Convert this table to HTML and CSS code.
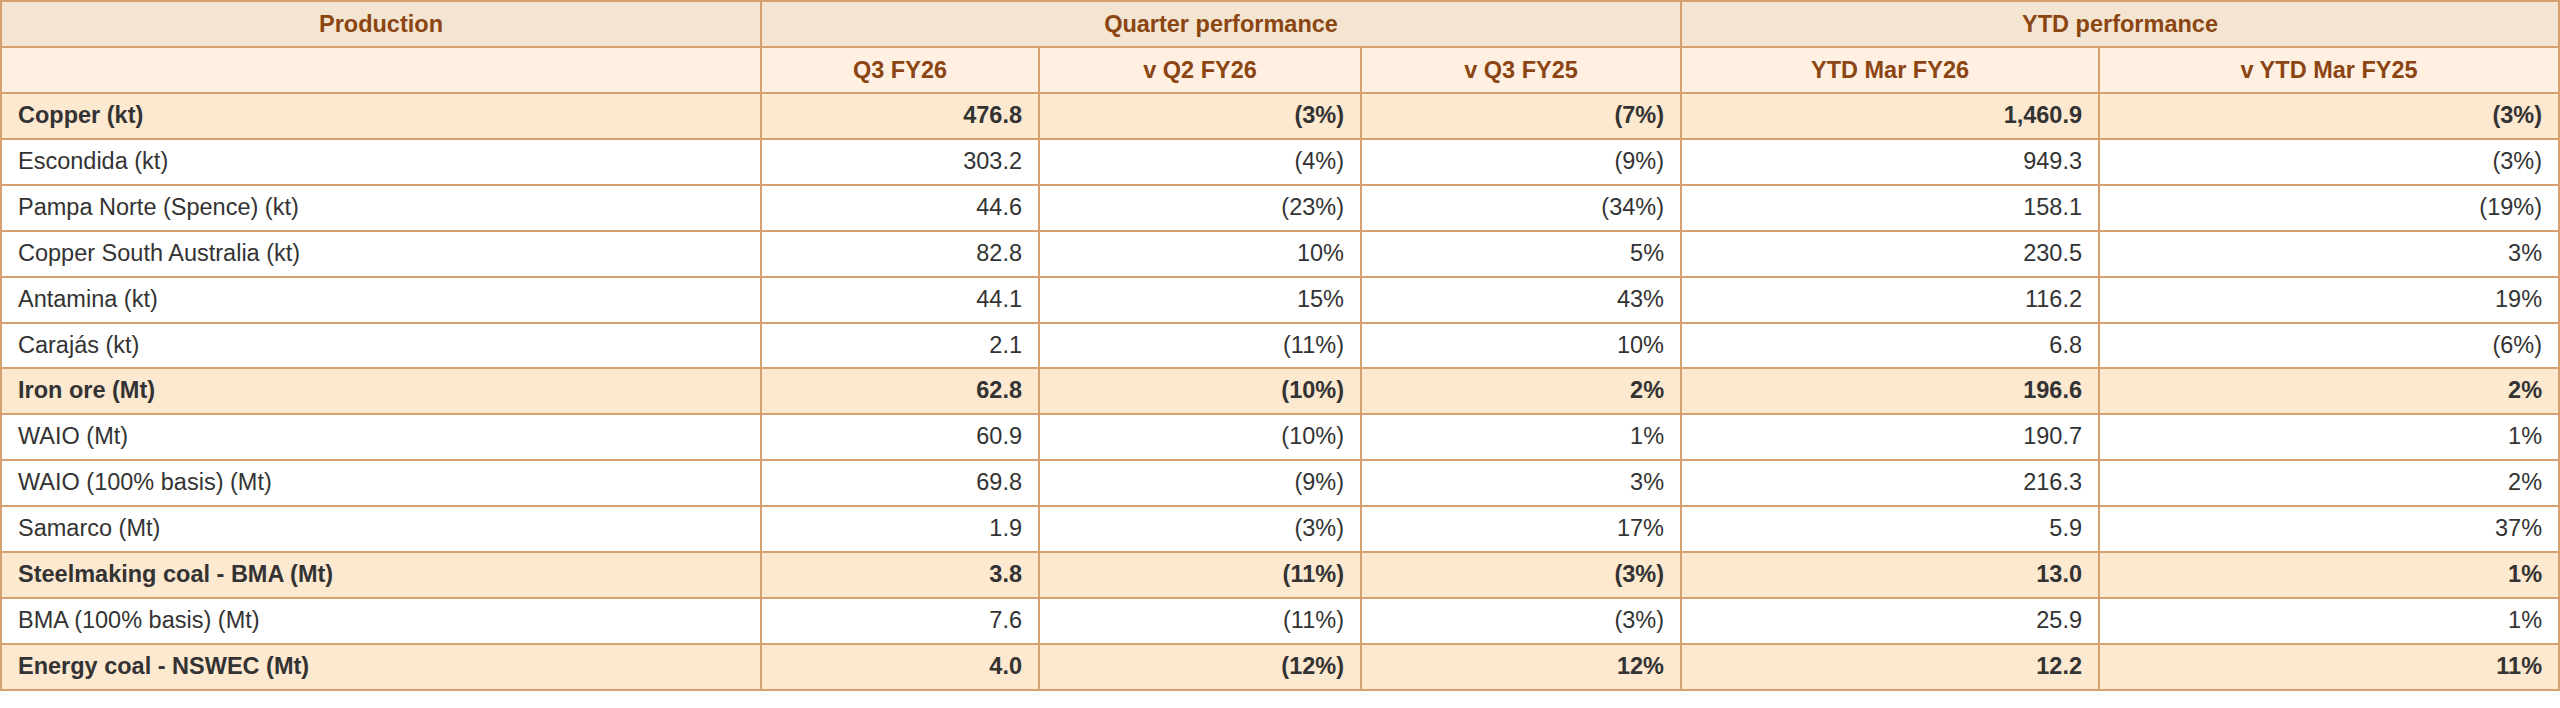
FILE: index.html
```html
<!DOCTYPE html>
<html lang="en">
<head>
<meta charset="utf-8">
<title>Production</title>
<link rel="stylesheet" href="styles.css">
</head>
<body>
<table class="prod">
  <colgroup>
    <col class="c1"><col class="c2"><col class="c3"><col class="c4"><col class="c5"><col class="c6">
  </colgroup>
  <thead>
    <tr class="h1">
      <th>Production</th>
      <th colspan="3">Quarter performance</th>
      <th colspan="2">YTD performance</th>
    </tr>
    <tr class="h2">
      <th></th>
      <th>Q3 FY26</th>
      <th>v Q2 FY26</th>
      <th>v Q3 FY25</th>
      <th>YTD Mar FY26</th>
      <th>v YTD Mar FY25</th>
    </tr>
  </thead>
  <tbody>
    <tr class="grp"><td>Copper (kt)</td><td>476.8</td><td>(3%)</td><td>(7%)</td><td>1,460.9</td><td>(3%)</td></tr>
    <tr><td>Escondida (kt)</td><td>303.2</td><td>(4%)</td><td>(9%)</td><td>949.3</td><td>(3%)</td></tr>
    <tr><td>Pampa Norte (Spence) (kt)</td><td>44.6</td><td>(23%)</td><td>(34%)</td><td>158.1</td><td>(19%)</td></tr>
    <tr><td>Copper South Australia (kt)</td><td>82.8</td><td>10%</td><td>5%</td><td>230.5</td><td>3%</td></tr>
    <tr><td>Antamina (kt)</td><td>44.1</td><td>15%</td><td>43%</td><td>116.2</td><td>19%</td></tr>
    <tr><td>Carajás (kt)</td><td>2.1</td><td>(11%)</td><td>10%</td><td>6.8</td><td>(6%)</td></tr>
    <tr class="grp"><td>Iron ore (Mt)</td><td>62.8</td><td>(10%)</td><td>2%</td><td>196.6</td><td>2%</td></tr>
    <tr><td>WAIO (Mt)</td><td>60.9</td><td>(10%)</td><td>1%</td><td>190.7</td><td>1%</td></tr>
    <tr><td>WAIO (100% basis) (Mt)</td><td>69.8</td><td>(9%)</td><td>3%</td><td>216.3</td><td>2%</td></tr>
    <tr><td>Samarco (Mt)</td><td>1.9</td><td>(3%)</td><td>17%</td><td>5.9</td><td>37%</td></tr>
    <tr class="grp"><td>Steelmaking coal - BMA (Mt)</td><td>3.8</td><td>(11%)</td><td>(3%)</td><td>13.0</td><td>1%</td></tr>
    <tr><td>BMA (100% basis) (Mt)</td><td>7.6</td><td>(11%)</td><td>(3%)</td><td>25.9</td><td>1%</td></tr>
    <tr class="grp"><td>Energy coal - NSWEC (Mt)</td><td>4.0</td><td>(12%)</td><td>12%</td><td>12.2</td><td>11%</td></tr>
  </tbody>
</table>
</body>
</html>
```

FILE: styles.css
```css
html, body {
  margin: 0;
  padding: 0;
  background: #ffffff;
}

body {
  font-family: "Liberation Sans", Arial, sans-serif;
  font-size: 23.5px;
  color: #333333;
}

.prod {
  width: 2560px;
  border-collapse: collapse;
  table-layout: fixed;
}

.c1 { width: 760px; }
.c2 { width: 278px; }
.c3 { width: 322px; }
.c4 { width: 320px; }
.c5 { width: 418px; }
.c6 { width: 460px; }

.prod th,
.prod td {
  border: 2px solid #d6a16e;
  padding: 10px 16px;
  white-space: nowrap;
}

.prod th {
  font-weight: bold;
  color: #8b4513;
  text-align: center;
  line-height: 24px;
}

.h1 th {
  background: #f3e5d1;
}

.h2 th {
  background: #fff0e1;
}

.prod td {
  line-height: 23.9px;
  text-align: right;
  background: #ffffff;
}

.prod td:first-child {
  text-align: left;
}

.grp td {
  background: #fde8d0;
  font-weight: bold;
}
```
